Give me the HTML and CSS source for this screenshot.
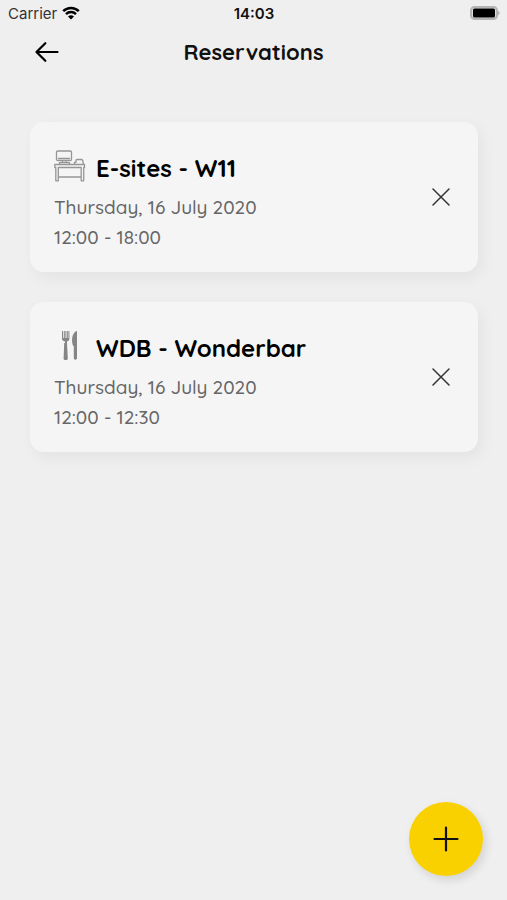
FILE: index.html
```html
<!DOCTYPE html>
<html lang="en">
<head>
<meta charset="utf-8">
<meta name="viewport" content="width=device-width, initial-scale=1">
<title>Reservations</title>
<link rel="stylesheet" href="styles.css">
</head>
<body>
<div class="status-bar">
  <div class="carrier">
    <span>Carrier</span>
    <svg width="18" height="14" viewBox="0 0 18 14" aria-hidden="true">
      <path d="M1.2 5.2a11.2 11.2 0 0 1 15.6 0M4 8.1a7.2 7.2 0 0 1 10 0" fill="none" stroke="#000" stroke-width="2.5"/>
      <path d="M9 13.6 6 10.6a4.300 4.300 0 0 1 6 0z"/>
    </svg>
  </div>
  <time class="clock">14:03</time>
  <svg class="battery" width="30" height="14" viewBox="0 0 30 14" aria-hidden="true">
    <rect x="1" y="1" width="26" height="12" rx="3.500" fill="#ddd" stroke="#b4b4b4" stroke-width="2"/>
    <rect x="3" y="2.500" width="22" height="9" rx="1.500"/>
    <path d="M28.200 4.800c1.800.8 1.800 3.600 0 4.400z" fill="#aaa"/>
  </svg>
</div>
<header class="header">
  <button class="icon-button" type="button" aria-label="Back">
    <svg width="24" height="20" viewBox="0 0 24 20"><path d="M10.300 1.200 1.500 10l8.800 8.800M1.500 10h21" fill="none" stroke="#000" stroke-width="2.200" stroke-linecap="round" stroke-linejoin="round"/></svg>
  </button>
  <h1 class="page-title">Reservations</h1>
</header>
<main class="list">
  <article class="card">
    <div class="details">
      <div class="heading">
        <svg width="32" height="32" viewBox="0 0 32 32" fill="none" stroke="#969696" stroke-width="1.300" stroke-linejoin="round" aria-hidden="true">
          <rect x="2.500" y="1" width="15" height="9.500" rx="1.200"/>
          <path d="M4 8.500h12M8.500 10.500v2.200h3.500v-2.200M5.500 14.500v-1.800h10v1.800M20.500 14.500v-2.200h1.500V10.500q0-1 1-1h4.500q1 0 1.200 1l.8 4"/>
          <path d="M.8 14.500h29.700v3h-.8v13.300h-2.500V27H4.300v3.800H1.800V17.500h-1zM4.300 17.500h22.900V27H4.300z"/>
        </svg>
        <h2 class="name">E-sites - W11</h2>
      </div>
      <p class="line">Thursday, 16 July 2020</p>
      <p class="line">12:00 - 18:00</p>
    </div>
    <button class="icon-button" type="button" aria-label="Cancel E-sites - W11">
      <svg width="18" height="18" viewBox="0 0 18 18"><path d="m1 1 16 16M17 1 1 17" stroke="#333" stroke-width="1.500" stroke-linecap="round"/></svg>
    </button>
  </article>
  <article class="card">
    <div class="details">
      <div class="heading">
        <svg width="32" height="32" viewBox="0 0 32 32" fill="#858585" aria-hidden="true">
          <path d="M8 1h1.200v7h1V1h1.400v7h1V1h1.200v7h.6V1h1v7.500c0 1.700-.8 2.500-2.400 3v1.500h-2v-1.500C8.900 11 8 10.200 8 8.500z"/>
          <path d="M10.200 13h2.800l.8 15.500c.1 2-4.300 2-4.200 0zM23 1v27.500c0 1.500-3.200 1.500-3.200 0V16.500l-1.100-1.500c-1.600-6.500 0-13 4.300-14z"/>
        </svg>
        <h2 class="name">WDB - Wonderbar</h2>
      </div>
      <p class="line">Thursday, 16 July 2020</p>
      <p class="line">12:00 - 12:30</p>
    </div>
    <button class="icon-button" type="button" aria-label="Cancel WDB - Wonderbar">
      <svg width="18" height="18" viewBox="0 0 18 18"><path d="m1 1 16 16M17 1 1 17" stroke="#333" stroke-width="1.500" stroke-linecap="round"/></svg>
    </button>
  </article>
</main>
<button class="add" type="button" aria-label="Add reservation">
  <svg width="26" height="26" viewBox="0 0 26 26"><path d="M13 1.500v23M1.500 13h23" stroke="#111" stroke-width="2.200" stroke-linecap="round"/></svg>
</button>
</body>
</html>
```
FILE: styles.css
```css
* {
  box-sizing: border-box;
}

body {
  margin: 0;
  min-height: 100vh;
  background: #efefef;
  color: #111;
  font-family: Quicksand, Lato, sans-serif;
}

h1,
h2,
p {
  margin: 0;
}

svg {
  display: block;
  flex: none;
}

button {
  display: grid;
  place-items: center;
  padding: 0;
  border: 0;
  background: none;
  cursor: pointer;
}

.status-bar {
  display: grid;
  grid-template-columns: 1fr auto 1fr;
  align-items: center;
  height: 26px;
  padding: 0 7px 0 8px;
  font-family: Inter, sans-serif;
  font-size: 15px;
}

.carrier {
  display: flex;
  align-items: center;
  gap: 5px;
}

.carrier span {
  color: #333;
}

.clock {
  font-weight: 600;
}

.battery {
  justify-self: end;
}

.header {
  display: grid;
  grid-template-columns: 34px 1fr 34px;
  align-items: center;
  height: 52px;
  padding: 0 30px;
}

.icon-button {
  width: 34px;
  height: 34px;
}

.page-title {
  font-size: 22px;
  font-weight: 700;
  line-height: 30px;
  text-align: center;
}

.list {
  display: grid;
  gap: 30px;
  padding: 44px 29px 120px 30px;
}

.card {
  display: flex;
  align-items: center;
  justify-content: space-between;
  padding: 22px 20px 20px 24px;
  border-radius: 14px;
  background: #f5f5f5;
  box-shadow: 4px 6px 16px rgba(0, 0, 0, 0.05);
}

.heading {
  display: flex;
  align-items: center;
  gap: 10px;
  height: 48px;
}

.heading svg {
  margin-bottom: 4px;
}

.name {
  color: #000;
  font-size: 24px;
  font-weight: 700;
  line-height: 32px;
}

.line {
  color: #666;
  font-size: 19px;
  font-weight: 500;
  line-height: 30px;
}

.card .icon-button {
  margin-bottom: 2px;
}

.add {
  position: fixed;
  right: 24px;
  bottom: 24px;
  width: 74px;
  height: 74px;
  border-radius: 50%;
  background: #f9d000;
  box-shadow: 3px 4px 10px rgba(0, 0, 0, 0.12);
}
```
